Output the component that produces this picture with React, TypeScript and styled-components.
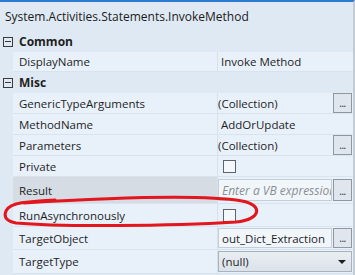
import styled, { createGlobalStyle } from "styled-components";

const GlobalStyle = createGlobalStyle`
  html, body {
    margin: 0;
    padding: 0;
    background: #dfe9f3;
  }
  * {
    box-sizing: border-box;
  }
`;

const Panel = styled.div`
  position: relative;
  width: 355px;
  height: 275px;
  overflow: hidden;
  display: flex;
  flex-direction: column;
  background-color: #dfe9f3;
  border-top: 2px solid #2d7bd1;
  border-right: 2px solid #c3ccd5;
  font-family: "Open Sans", "Liberation Sans", sans-serif;
  font-size: 11.5px;
  color: #1e1e1e;
`;

const TitleBar = styled.div`
  height: 29px;
  display: flex;
  align-items: center;
  padding-left: 5px;
  font-size: 12px;
  color: #1b1b1b;
`;

const CategoryHeader = styled.div`
  height: 21px;
  display: flex;
  align-items: center;
  gap: 6px;
  padding-left: 3px;
  font-weight: 700;
  font-size: 12px;
`;

const Toggle = styled.span`
  width: 10px;
  height: 10px;
  border: 1px solid #3a3a3a;
  position: relative;
  &::after {
    content: "";
    position: absolute;
    left: 1px;
    right: 1px;
    top: 3px;
    height: 1px;
    background: #3a3a3a;
  }
`;

const Rows = styled.div`
  margin-left: 13px;
  display: flex;
  flex-direction: column;
`;

const Row = styled.div<{ $h: number }>`
  height: ${(p) => p.$h}px;
  display: grid;
  grid-template-columns: 205px 1fr;
  background-color: #e8f1fa;
  border-bottom: 1px solid #d8e3ee;
`;

const Label = styled.div<{ $selected?: boolean }>`
  display: flex;
  align-items: center;
  padding-left: 6px;
  border-right: 1px solid #d6e1ec;
  background-color: ${(p) => (p.$selected ? "#d5dce4" : "transparent")};
`;

const Value = styled.div`
  display: flex;
  align-items: center;
  gap: 1px;
  padding-right: 1px;
  min-width: 0;
`;

const PlainText = styled.span<{ $indent: number; $grow?: boolean }>`
  padding-left: ${(p) => p.$indent}px;
  flex: ${(p) => (p.$grow ? 1 : "none")};
  white-space: nowrap;
`;

const Box = styled.div<{ $h: number; $size: number }>`
  flex: 1;
  min-width: 0;
  height: ${(p) => p.$h}px;
  display: flex;
  align-items: center;
  padding-left: 3px;
  border: 1px solid #c6cfd8;
  background-color: #f1f6fb;
  overflow: hidden;
  white-space: nowrap;
  font-size: ${(p) => p.$size}px;
`;

const Placeholder = styled.span`
  font-style: italic;
  color: #8a8f95;
`;

const DotsButton = styled.div<{ $h: number }>`
  width: 19px;
  height: ${(p) => p.$h}px;
  flex-shrink: 0;
  border: 1px solid #8f979f;
  background-color: #dfe6ed;
  display: flex;
  align-items: flex-end;
  justify-content: center;
  padding-bottom: 4px;
  font-size: 10px;
  line-height: 1;
  letter-spacing: -0.5px;
`;

const Check = styled.span`
  width: 13px;
  height: 13px;
  margin-left: 5px;
  border: 1px solid #5f6368;
  background-color: #f4f8fc;
`;

const Select = styled.div`
  flex: 1;
  height: 21px;
  display: flex;
  align-items: center;
  justify-content: space-between;
  padding: 0 5px 0 3px;
  border: 1px solid #a9b2bb;
  background: linear-gradient(#e9eef3, #dbe2e9);
`;

const Arrow = styled.span`
  width: 0;
  height: 0;
  border-left: 4px solid transparent;
  border-right: 4px solid transparent;
  border-top: 4px solid #1e1e1e;
`;

const Annotation = styled.svg`
  position: absolute;
  left: 0;
  top: -2px;
  pointer-events: none;
`;

type Kind =
  | { t: "text"; v: string; indent?: number }
  | { t: "collection" }
  | { t: "check" }
  | { t: "expr" }
  | { t: "input"; v: string }
  | { t: "select"; v: string };

type Prop = { name: string; h: number; kind: Kind; selected?: boolean };

const common: Prop[] = [
  { name: "DisplayName", h: 20, kind: { t: "text", v: "Invoke Method", indent: 3 } },
];

const misc: Prop[] = [
  { name: "GenericTypeArguments", h: 21, kind: { t: "collection" } },
  { name: "MethodName", h: 21, kind: { t: "text", v: "AddOrUpdate", indent: 3 } },
  { name: "Parameters", h: 21, kind: { t: "collection" } },
  { name: "Private", h: 21, kind: { t: "check" } },
  { name: "Result", h: 27, kind: { t: "expr" }, selected: true },
  { name: "RunAsynchronously", h: 23, kind: { t: "check" } },
  { name: "TargetObject", h: 23, kind: { t: "input", v: "out_Dict_Extraction" } },
  { name: "TargetType", h: 24, kind: { t: "select", v: "(null)" } },
];

function ValueCell({ kind }: { kind: Kind }) {
  switch (kind.t) {
    case "text":
      return <PlainText $indent={kind.indent ?? 3}>{kind.v}</PlainText>;
    case "collection":
      return (
        <>
          <PlainText $indent={0} $grow>(Collection)</PlainText>
          <DotsButton $h={20}>...</DotsButton>
        </>
      );
    case "check":
      return <Check />;
    case "expr":
      return (
        <>
          <Box $h={22} $size={12}>
            <Placeholder>Enter a VB expression</Placeholder>
          </Box>
          <DotsButton $h={22}>...</DotsButton>
        </>
      );
    case "input":
      return (
        <>
          <Box $h={20} $size={11.5}>{kind.v}</Box>
          <DotsButton $h={20}>...</DotsButton>
        </>
      );
    case "select":
      return (
        <Select>
          <span>{kind.v}</span>
          <Arrow />
        </Select>
      );
  }
}

function Category({ name, items }: { name: string; items: Prop[] }) {
  return (
    <>
      <CategoryHeader>
        <Toggle />
        {name}
      </CategoryHeader>
      <Rows>
        {items.map((p) => (
          <Row key={p.name} $h={p.h}>
            <Label $selected={p.selected}>{p.name}</Label>
            <Value>
              <ValueCell kind={p.kind} />
            </Value>
          </Row>
        ))}
      </Rows>
    </>
  );
}

export default function App() {
  return (
    <>
      <GlobalStyle />
      <Panel>
        <TitleBar>System.Activities.Statements.InvokeMethod</TitleBar>
        <Category name="Common" items={common} />
        <Category name="Misc" items={misc} />
        <Annotation width="355" height="275" viewBox="0 0 355 275">
          <path
            d="M 24 203 C 90 199, 200 194, 242 201 C 263 205, 262 219, 236 222 C 170 226, 60 227, 16 223 C 0 220, 3 208, 16 204 C 30 201, 42 201, 55 200"
            fill="none"
            stroke="#e3161e"
            strokeWidth="3"
            strokeLinecap="round"
          />
        </Annotation>
      </Panel>
    </>
  );
}
